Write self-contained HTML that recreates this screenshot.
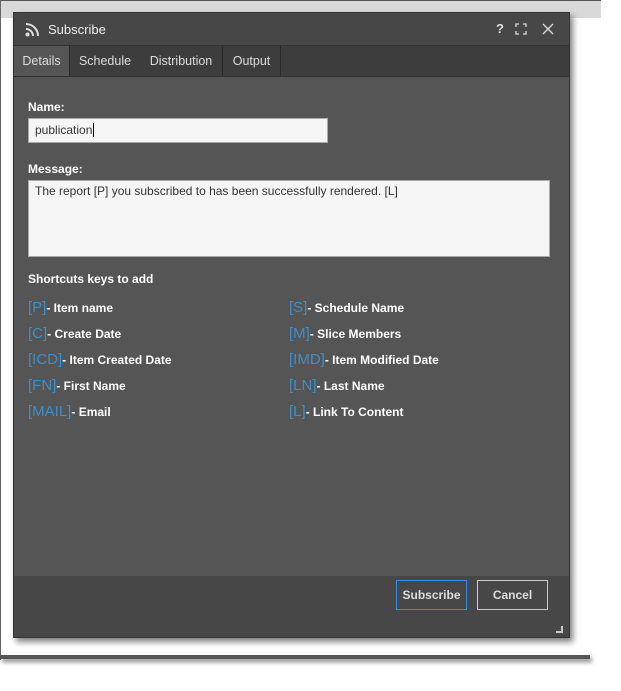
<!DOCTYPE html>
<html><head><style>
body{margin:0;width:621px;height:691px;background:#fff;position:relative;overflow:hidden;font-family:"Liberation Sans",sans-serif}
.top{position:absolute;left:0;top:0;width:600px;height:17px;background:#d9d9d9;border-top:1px solid #555;border-left:1px solid #555}
.lb{position:absolute;left:0;top:0;width:1px;height:660px;background:#666}
.bot{position:absolute;left:0;top:655px;width:590px;height:4px;background:#555;box-shadow:2px 3px 4px rgba(0,0,0,.5)}
.dlg{position:absolute;left:13px;top:12px;width:555px;height:624px;background:#555;border:1px solid #333;box-shadow:3px 4px 6px rgba(0,0,0,.5)}
.title{position:absolute;left:0;top:0;width:555px;height:32px;background:#474747;border-bottom:1px solid #333;color:#eee;font-size:13px}
.tabs{position:absolute;left:0;top:33px;width:555px;height:30px;background:#3d3d3d;border-bottom:1px solid #2e2e2e}
.tab{position:absolute;top:0;height:30px;line-height:30px;color:#ddd;font-size:12.5px;text-align:center;border-right:1px solid #2a2a2a;background:#3d3d3d}
.lbl{position:absolute;color:#fff;font-size:12px;font-weight:bold}
.inp{position:absolute;background:#f5f5f5;border:1px solid #aaa;font-size:12px;color:#333}
.sc{position:absolute;font-size:12px;color:#fff;font-weight:bold;white-space:nowrap}
.sc b{color:#3e8fc9;font-weight:normal;font-size:15px}
.foot{position:absolute;left:0;top:563px;width:555px;height:61px;background:#474747}
.btn{position:absolute;top:4px;height:28px;line-height:28px;text-align:center;color:#ddd;font-size:12px;font-weight:bold}
</style></head><body>
<div class="top"></div><div class="lb"></div><div class="bot"></div>
<div class="dlg">
 <div class="title">
  <svg style="position:absolute;left:11px;top:9px" width="15" height="15" viewBox="0 0 15 15"><circle cx="2.5" cy="12.5" r="2" fill="#ddd"/><path d="M1 7a7 7 0 0 1 7 7M1 2a12 12 0 0 1 12 12" stroke="#ddd" stroke-width="2" fill="none"/></svg>
  <span style="position:absolute;left:34px;top:9px">Subscribe</span>
  <span style="position:absolute;left:482px;top:8px;font-weight:bold;font-size:13px;color:#ddd">?</span>
  <svg style="position:absolute;left:501px;top:10px" width="12" height="12" viewBox="0 0 12 12" fill="none" stroke="#ddd" stroke-width="1.3"><path d="M1 4V1h3M8 1h3v3M11 8v3H8M4 11H1V8"/></svg>
  <svg style="position:absolute;left:528px;top:10px" width="12" height="12" viewBox="0 0 12 12" stroke="#ddd" stroke-width="1.3"><path d="M1 1l10 10M11 1L1 11"/></svg>
 </div>
 <div class="tabs">
  <div class="tab" style="left:0;width:55px;background:#555;border-right:none">Details</div>
  <div class="tab" style="left:55px;width:70px;border-left:1px solid #2a2a2a">Schedule</div>
  <div class="tab" style="left:126px;width:82px">Distribution</div>
  <div class="tab" style="left:209px;width:57px">Output</div>
 </div>
 <div class="lbl" style="left:14px;top:87px">Name:</div>
 <div class="inp" style="left:14px;top:105px;width:292px;height:23px;line-height:23px;padding-left:6px">publication<span style="border-left:1px solid #000;margin-left:1px"></span></div>
 <div class="lbl" style="left:14px;top:149px">Message:</div>
 <div class="inp" style="left:14px;top:167px;width:514px;height:72px;padding:3px 0 0 6px">The report [P] you subscribed to has been successfully rendered. [L]</div>
 <div class="lbl" style="left:14px;top:259px">Shortcuts keys to add</div>
 <div class="sc" style="left:14px;top:286px"><b>[P]</b>- Item name</div>
 <div class="sc" style="left:14px;top:312px"><b>[C]</b>- Create Date</div>
 <div class="sc" style="left:14px;top:338px"><b>[ICD]</b>- Item Created Date</div>
 <div class="sc" style="left:14px;top:364px"><b>[FN]</b>- First Name</div>
 <div class="sc" style="left:14px;top:390px"><b>[MAIL]</b>- Email</div>
 <div class="sc" style="left:275px;top:286px"><b>[S]</b>- Schedule Name</div>
 <div class="sc" style="left:275px;top:312px"><b>[M]</b>- Slice Members</div>
 <div class="sc" style="left:275px;top:338px"><b>[IMD]</b>- Item Modified Date</div>
 <div class="sc" style="left:275px;top:364px"><b>[LN]</b>- Last Name</div>
 <div class="sc" style="left:275px;top:390px"><b>[L]</b>- Link To Content</div>
 <div class="foot">
  <div class="btn" style="left:382px;width:69px;border:1px solid #3a8ee6">Subscribe</div>
  <div class="btn" style="left:463px;width:69px;border:1px solid #ccc">Cancel</div>
  <div style="position:absolute;left:542px;top:50px;width:5px;height:5px;border-right:2px solid #ccc;border-bottom:2px solid #ccc"></div>
 </div>
</div>
</body></html>
